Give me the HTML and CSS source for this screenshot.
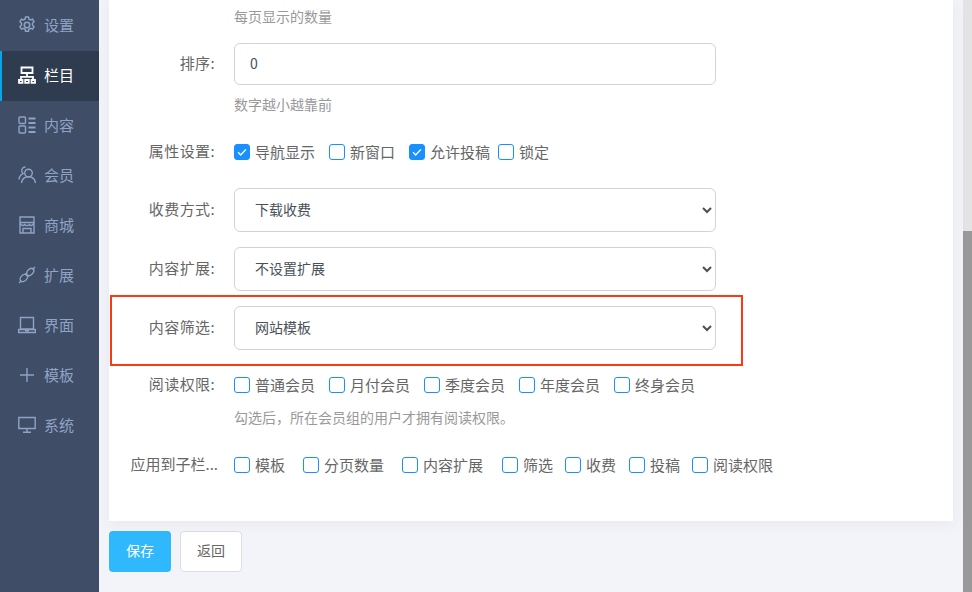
FILE: index.html
```html
<!DOCTYPE html>
<html lang="zh-CN">
<head>
<meta charset="utf-8">
<title>栏目</title>
<link rel="stylesheet" href="styles.css">
</head>
<body>
<div class="app">
  <nav class="side">
    <a class="nav"><svg class="ico" viewBox="1.3 .2 15.4 17.2"><path d="M7.600 1.200h2.800l.5 2.100 1.400.7 2-.8 1.400 2.400-1.500 1.500v1.700l1.500 1.500-1.400 2.400-2-.8-1.400.7-.5 2.100H7.600l-.5-2.100-1.400-.7-2 .8-1.400-2.400 1.500-1.500V7.100L2.300 5.600l1.400-2.400 2 .8 1.400-.7z"/><circle cx="9" cy="8.800" r="2.600"/></svg><span>设置</span></a>
    <a class="nav on"><svg class="ico" viewBox="0 0 18 18"><path d="M3.500 1.500h11v5.500h-11zM9 7v3M3 14v-3.200h12V14"/><path d="M1 14h3.500v2.800H1zM7.200 14h3.600v2.800H7.200zM13.500 14H17v2.800h-3.500z"/></svg><span>栏目</span></a>
    <a class="nav"><svg class="ico" viewBox="0 0 18 18"><rect x="1" y="1" width="6.500" height="6.500" rx="1"/><rect x="1" y="10" width="6.500" height="7" rx="1"/><path class="thick" d="M10.500 2.500h7M10.500 7h7M10.500 11.500h7M10.500 16h7"/></svg><span>内容</span></a>
    <a class="nav"><svg class="ico" viewBox="0 0 18 18"><circle cx="10.500" cy="7" r="3.800"/><path d="M3.500 17c.5-4 3-6.200 7-6.200s6.500 2.200 7 6.200M7.500 1C5 1 3.800 2.800 3.800 4.600c0 1.300.5 2.300 1.300 3C2.800 8.600 1.300 10.600 1 13.500"/></svg><span>会员</span></a>
    <a class="nav"><svg class="ico" viewBox="0 0 18 18"><path d="M2 1h14v16H2zM2 6.500h14M2 7.500c2 2.500 3.500 2.500 4.700 1 1.300 1.500 3.300 1.500 4.600 0 1.200 1.500 2.700 1.500 4.700-1M5 17v-4.500h8V17"/></svg><span>商城</span></a>
    <a class="nav"><svg class="ico" viewBox="0 0 18 18"><ellipse cx="5.800" cy="12" rx="4.200" ry="3" transform="rotate(-45 5.800 12)"/><ellipse cx="12.200" cy="6" rx="4.200" ry="2.800" transform="rotate(-45 12.200 6)"/><path d="M14.500 3.500L17 1M1 17l2-2M7 7.500l3.500 3.500"/></svg><span>扩展</span></a>
    <a class="nav"><svg class="ico" viewBox="0 0 18 18"><path d="M2.500 1.500h13v11.500h-13zM.7 13.500h16.600V16.500H.7zM7 14.700h4"/></svg><span>界面</span></a>
    <a class="nav"><svg class="ico" viewBox="0 0 18 18"><path d="M9 2v14M2 9h14"/></svg><span>模板</span></a>
    <a class="nav"><svg class="ico" viewBox="0 0 18 18"><path d="M.8 1.500h16.400v11H.8zM9 12.500V16M5 16.200h8"/></svg><span>系统</span></a>
  </nav>
  <main class="main">
    <div class="card">
      <p class="hint first">每页显示的数量</p>
      <div class="row r-input">
        <label class="lab">排序:</label>
        <input class="ctl inp" value="0">
      </div>
      <p class="hint h2">数字越小越靠前</p>
      <div class="row r-check">
        <label class="lab">属性设置:</label>
        <div class="checks">
          <span class="chk"><i class="box on"><svg viewBox="0 0 16 16"><path d="M3.500 8.300l3 3 6-6.300"/></svg></i><span class="txt">导航显示</span></span>
          <span class="chk"><i class="box"></i><span class="txt">新窗口</span></span>
          <span class="chk g8"><i class="box on"><svg viewBox="0 0 16 16"><path d="M3.500 8.300l3 3 6-6.300"/></svg></i><span class="txt">允许投稿</span></span>
          <span class="chk"><i class="box"></i><span class="txt">锁定</span></span>
        </div>
      </div>
      <div class="row r-sel1">
        <label class="lab">收费方式:</label>
        <select class="ctl sel"><option>下载收费</option></select>
      </div>
      <div class="row r-sel">
        <label class="lab">内容扩展:</label>
        <select class="ctl sel"><option>不设置扩展</option></select>
      </div>
      <div class="row r-sel">
        <label class="lab">内容筛选:</label>
        <select class="ctl sel"><option>网站模板</option></select>
        <div class="mark"></div>
      </div>
      <div class="row r-check2">
        <label class="lab">阅读权限:</label>
        <div class="checks">
          <span class="chk"><i class="box"></i><span class="txt">普通会员</span></span>
          <span class="chk"><i class="box"></i><span class="txt">月付会员</span></span>
          <span class="chk"><i class="box"></i><span class="txt">季度会员</span></span>
          <span class="chk"><i class="box"></i><span class="txt">年度会员</span></span>
          <span class="chk"><i class="box"></i><span class="txt">终身会员</span></span>
        </div>
      </div>
      <p class="hint h3">勾选后&#xFF0C;所在会员组的用户才拥有阅读权限。</p>
      <div class="row r-check3">
        <label class="lab long">应用到子栏...</label>
        <div class="checks">
          <span class="chk g18"><i class="box"></i><span class="txt">模板</span></span>
          <span class="chk g18"><i class="box"></i><span class="txt">分页数量</span></span>
          <span class="chk g19"><i class="box"></i><span class="txt">内容扩展</span></span>
          <span class="chk g12"><i class="box"></i><span class="txt">筛选</span></span>
          <span class="chk g13"><i class="box"></i><span class="txt">收费</span></span>
          <span class="chk g12"><i class="box"></i><span class="txt">投稿</span></span>
          <span class="chk"><i class="box"></i><span class="txt">阅读权限</span></span>
        </div>
      </div>
    </div>
    <div class="btns">
      <button class="btn pri">保存</button>
      <button class="btn sec">返回</button>
    </div>
  </main>
  <div class="bar"><div class="track"></div><div class="thumb"></div></div>
</div>
</body>
</html>
```

FILE: styles.css
```css
* { box-sizing: border-box; }
html, body { margin: 0; height: 100%; overflow: hidden; }
body { font-family: "Noto Sans CJK SC", "Liberation Sans", sans-serif; font-size: 14px; color: #666; background: #f3f4f9; }
.app { display: flex; height: 592px; }
.side { width: 99px; flex: none; background: #3f4d67; padding-top: 1px; }
.nav { display: flex; align-items: center; height: 50px; padding: 0 0 2px 18px; color: #8fa3c4; font-size: 15px; }
.nav span { margin: 0 0 2px 8px; }
.nav.on { background: #2f3c50; color: #fff; border-left: 2px solid #0aa5e8; padding-left: 16px; }
.ico { width: 18px; height: 18px; flex: none; fill: none; stroke: currentColor; stroke-width: 1.4; }
.ico .thick { stroke-width: 2; }
.on .ico { stroke-width: 1.8; }
.main { width: 864px; flex: none; padding-left: 10px; }
.card { position: relative; width: 844px; height: 521px; background: #fff; box-shadow: 0 2px 14px rgba(60, 70, 110, .07); }
.hint { margin: 0; padding-left: 125px; font-size: 14px; line-height: 18px; color: #999; }
.hint.first { padding-top: 7px; }
.hint.h2 { margin-top: 10px; }
.hint.h3 { margin-top: 14px; }
.row { display: flex; align-items: center; position: relative; }
.r-input { margin-top: 18px; }
.r-check { margin-top: 30px; height: 18px; }
.r-sel1 { margin-top: 27px; }
.r-sel { margin-top: 15px; }
.r-check2 { margin-top: 26px; height: 18px; }
.r-check3 { margin-top: 30px; height: 18px; }
.lab { width: 106px; flex: none; margin-right: 19px; padding-bottom: 3px; text-align: right; font-size: 15px; letter-spacing: .4px; color: #666; white-space: nowrap; }
.lab.long { width: 109px; margin-right: 16px; letter-spacing: 0; }
.ctl { width: 482px; border: 1px solid #ced4da; border-radius: 6px; background: #fff; color: #495057; font-family: inherit; font-size: 14px; }
.inp { height: 42px; padding: 0 15px 2px; outline: none; }
.sel { height: 44px; padding: 0 16px 2px; }
.checks { display: flex; align-items: center; }
.chk { display: flex; align-items: center; margin-right: 14px; font-size: 15px; color: #666; white-space: nowrap; }
.txt { margin-bottom: 2px; }
.chk.g8 { margin-right: 8px; }
.chk.g12 { margin-right: 12px; }
.chk.g13 { margin-right: 13px; }
.chk.g18 { margin-right: 18px; }
.chk.g19 { margin-right: 19px; }
.box { display: block; width: 16px; height: 16px; margin-right: 5px; border: 1px solid #1890ff; border-radius: 3px; background: #fff; }
.box.on { background: #1890ff; }
.box svg { display: block; width: 14px; height: 14px; fill: none; stroke: #fff; stroke-width: 1.6; }
.mark { position: absolute; left: 1px; top: -11px; width: 633px; height: 71px; border: 2px solid #f93a14; pointer-events: none; }
.btns { display: flex; gap: 9px; margin-top: 10px; }
.btn { width: 62px; height: 41px; padding: 0 0 3px; border-radius: 4px; font-family: inherit; font-size: 14px; }
.pri { background: #2fb8fb; border: 0; color: #fff; }
.sec { background: #fff; border: 1px solid #ddd; color: #666; }
.bar { width: 9px; flex: none; display: flex; flex-direction: column; }
.track { height: 231px; background: #e3e3e3; }
.thumb { flex: 1; background: #999; }
```
